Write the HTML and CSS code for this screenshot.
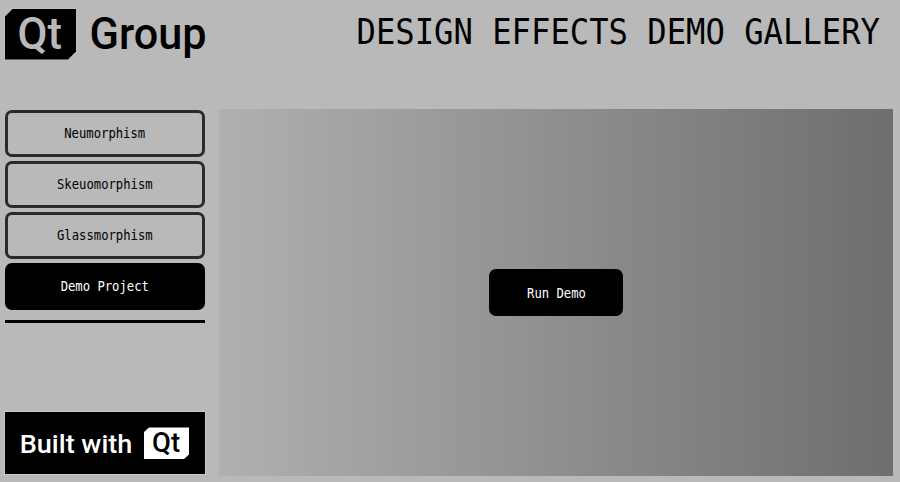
FILE: index.html
```html
<!DOCTYPE html>
<html lang="en">
<head>
<meta charset="utf-8">
<title>Design Effects Demo Gallery</title>
<link rel="stylesheet" href="styles.css">
</head>
<body>
<header class="header">
  <svg class="logo" width="224" height="72" viewBox="0 0 224 72" role="img" aria-label="Qt Group">
    <path class="halo" d="M12.5 9H76V51.5L68 59.5H5V16.5Z"/>
    <text class="brand brand-light" x="17.5" y="48.5" font-size="44" textLength="44.500" lengthAdjust="spacingAndGlyphs">Qt</text>
    <text class="brand brand-dark" x="89.5" y="49" font-size="44.500" textLength="117" lengthAdjust="spacingAndGlyphs">Group</text>
  </svg>
  <h1 class="title"><span class="title-text">DESIGN EFFECTS DEMO GALLERY</span></h1>
</header>
<main class="layout">
  <aside class="sidebar">
    <nav class="menu">
      <button class="btn"><span class="label">Neumorphism</span></button>
      <button class="btn"><span class="label">Skeuomorphism</span></button>
      <button class="btn"><span class="label">Glassmorphism</span></button>
      <button class="btn btn-solid"><span class="label">Demo Project</span></button>
    </nav>
    <div class="rule"></div>
    <svg class="badge" width="200" height="62" viewBox="0 0 200 62" role="img" aria-label="Built with Qt">
      <text class="brand brand-white" x="14.8" y="40.5" font-size="26.500" textLength="112.500" lengthAdjust="spacingAndGlyphs">Built with</text>
      <path fill="#fff" d="M144 15.500H184V42.500L179 47H139V20Z"/>
      <text class="brand brand-dark" x="147" y="40" font-size="27" textLength="28" lengthAdjust="spacingAndGlyphs">Qt</text>
    </svg>
  </aside>
  <section class="stage">
    <button class="btn btn-solid run"><span class="label">Run Demo</span></button>
  </section>
</main>
</body>
</html>
```

FILE: styles.css
```css
* {
  box-sizing: border-box;
}

body {
  margin: 0;
  width: 900px;
  height: 482px;
  overflow: hidden;
  background: #b9b9b9;
  font-family: "DejaVu Sans Mono", monospace;
  color: #000;
}

.header {
  display: flex;
  justify-content: space-between;
  height: 109px;
  padding-right: 20px;
}

.logo {
  display: block;
  overflow: visible;
}

.halo {
  fill: #000;
  stroke: #cacaca;
  stroke-width: 1;
  paint-order: stroke;
}

.brand {
  font-family: Roboto, sans-serif;
  font-weight: 500;
}

.brand-light {
  fill: #b9b9b9;
}

.brand-dark {
  fill: #000;
}

.brand-white {
  fill: #fff;
}

.title {
  margin: 0;
  height: 65px;
  font-size: 35px;
  font-weight: 400;
  line-height: 65px;
  white-space: nowrap;
}

.title-text {
  display: inline-block;
  transform: scaleX(0.92);
  transform-origin: right center;
}

.layout {
  display: flex;
  gap: 14px;
  height: 367px;
  padding: 0 7px 0 5px;
}

.sidebar {
  display: flex;
  flex-direction: column;
  width: 200px;
  padding: 1px 0 2px;
}

.menu {
  display: grid;
  gap: 4px;
}

.btn {
  display: flex;
  align-items: center;
  justify-content: center;
  height: 47px;
  padding: 0;
  border: 3px solid #2a2a2a;
  border-radius: 7px;
  background: transparent;
  color: #000;
  font: 13.5px "DejaVu Sans Mono", monospace;
}

.menu .btn {
  padding-bottom: 2px;
}

.btn-solid {
  border-color: #000;
  background: #000;
  color: #fff;
}

.label {
  transform: scaleX(0.905);
}

.rule {
  height: 3px;
  margin-top: 10px;
  background: #000;
}

.badge {
  display: block;
  margin-top: auto;
  background: #000;
  box-shadow: 0 0 0 1px #cacaca;
}

.stage {
  display: flex;
  align-items: center;
  justify-content: center;
  width: 674px;
  background: linear-gradient(90deg, #b0b0b0, #6e6e6e);
}

.run {
  width: 134px;
  padding-left: 1px;
}
```
